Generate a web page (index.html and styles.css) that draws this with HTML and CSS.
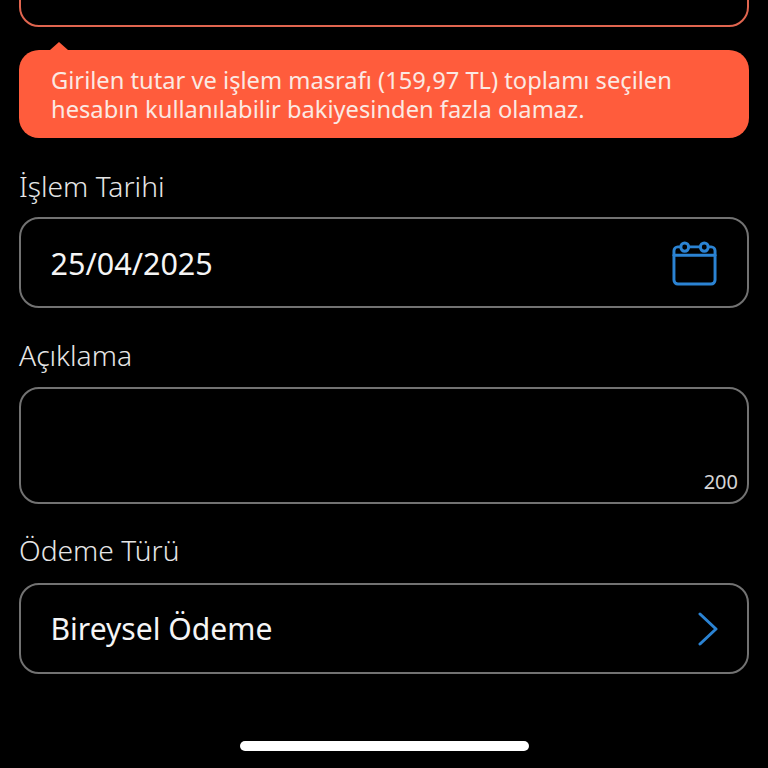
FILE: index.html
```html
<!DOCTYPE html>
<html lang="tr">
<head>
<meta charset="utf-8">
<title>Ödeme</title>
<link rel="stylesheet" href="styles.css">
</head>
<body>
<main class="screen">
  <div class="field field-error"></div>
  <div class="alert">
    <span class="alert-arrow"></span>
    <p class="alert-text">Girilen tutar ve işlem masrafı (159,97 TL) toplamı seçilen hesabın kullanılabilir bakiyesinden fazla olamaz.</p>
  </div>
  <label class="label label-date">İşlem Tarihi</label>
  <div class="field field-row">
    <span class="value">25/04/2025</span>
    <svg class="icon-cal" width="45" height="46" viewBox="0 0 46 47" fill="none" stroke="#2b83d3" stroke-width="3" stroke-linejoin="round" stroke-linecap="round">
      <path d="M9 7H6a4 4 0 0 0-4 4V41a4 4 0 0 0 4 4h34a4 4 0 0 0 4-4V11a4 4 0 0 0-4-4H37"/>
      <path d="M17 7h12"/>
      <path d="M2 15.500h42"/>
      <rect x="9" y="3" width="8" height="8.500" rx="4"/>
      <rect x="29" y="3" width="8" height="8.500" rx="4"/>
    </svg>
  </div>
  <label class="label label-desc">Açıklama</label>
  <div class="field field-area"><span class="counter">200</span></div>
  <label class="label label-type">Ödeme Türü</label>
  <div class="field field-row">
    <span class="value value-strong">Bireysel Ödeme</span>
    <svg class="icon-chev" width="22" height="34" viewBox="0 0 22 34" fill="none" stroke="#2b83d3" stroke-width="3" stroke-linecap="round" stroke-linejoin="round">
      <path d="M3 2l16 15L3 32"/>
    </svg>
  </div>
  <div class="home-bar"></div>
</main>
</body>
</html>
```
FILE: styles.css
```css
* { box-sizing: border-box; }
html, body { margin: 0; padding: 0; background: #000; }
.screen {
  width: 768px;
  height: 768px;
  overflow: hidden;
  background: #000;
  padding: 0 19px;
  font-family: "Noto Sans", "Open Sans", sans-serif;
  color: #f2f2f2;
  display: flex;
  flex-direction: column;
}
.field {
  width: 730px;
  flex: none;
  border: 2px solid #727272;
  border-radius: 20px;
}
.field-error {
  height: 87px;
  margin-top: -60px;
  border-color: #e0654f;
}
.alert {
  position: relative;
  flex: none;
  width: 730px;
  height: 88px;
  margin-top: 23px;
  background: #ff5c3c;
  border-radius: 20px;
  padding: 16px 32px 0;
}
.alert-arrow {
  position: absolute;
  left: 31px;
  top: -8px;
  width: 0;
  height: 0;
  border-left: 9px solid transparent;
  border-right: 9px solid transparent;
  border-bottom: 8px solid #ff5c3c;
}
.alert-text {
  margin: 0;
  font-size: 23.700px;
  line-height: 28.500px;
  color: #fbe9e3;
}
.label {
  display: block;
  flex: none;
  height: 40px;
  font-size: 28.200px;
  line-height: 38px;
  font-weight: 300;
  color: #e6e6e6;
}
.label-date { margin-top: 29px; margin-bottom: 10px; }
.label-desc { margin-top: 28px; margin-bottom: 11px; }
.label-type { margin-top: 27px; margin-bottom: 12px; }
.field-row {
  height: 91px;
  display: flex;
  align-items: center;
  justify-content: space-between;
  padding: 0 28px 0 29.500px;
}
.value {
  font-size: 30.500px;
  line-height: 40px;
  padding-top: 1px;
  color: #f5f5f5;
}
.value-strong { font-size: 30.100px; font-weight: 400; padding-top: 1px; }
.icon-cal { display: block; margin-right: 2px; }
.icon-chev { display: block; }
.field-area {
  height: 117px;
  display: flex;
  align-items: flex-end;
  justify-content: flex-end;
  padding: 0 9px 8px 0;
}
.counter {
  font-size: 20px;
  line-height: 24px;
  color: #d5d5d5;
}
.home-bar {
  flex: none;
  width: 289px;
  height: 10px;
  margin: 67px 0 0 221px;
  background: #fff;
  border-radius: 5px;
}
```
